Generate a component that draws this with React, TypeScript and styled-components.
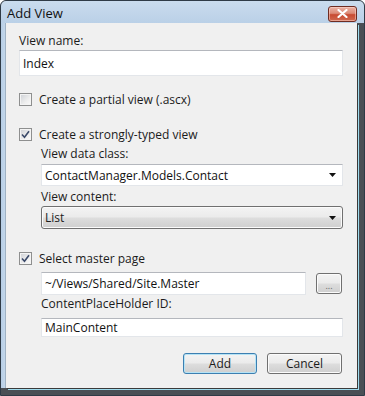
import React from "react";
import styled, { createGlobalStyle, css } from "styled-components";

const FONT = `"Open Sans", "Noto Sans", "DejaVu Sans", sans-serif`;

const Global = createGlobalStyle`
  html, body { margin: 0; padding: 0; background: #ffffff; }
  body { font-family: ${FONT}; }
`;

const Window = styled.div`
  width: 365px;
  height: 396px;
  box-sizing: border-box;
  display: flex;
  flex-direction: column;
  background: #4a4f55;
  border: 1px solid #2f3b47;
  border-radius: 6px 6px 0 0;
  overflow: hidden;
  font-family: ${FONT};
  color: #1b1b1b;
`;

const TitleBar = styled.div`
  height: 22px;
  flex: none;
  display: flex;
  align-items: center;
  justify-content: space-between;
  padding: 0 7px 0 6px;
  background: linear-gradient(#cadcee, #bad0e7);
`;

const Title = styled.div`
  font-size: 13px;
  color: #111;
  margin-top: 1px;
`;

const CloseButton = styled.div`
  width: 29px;
  height: 16px;
  box-sizing: border-box;
  margin-top: 3px;
  border: 1px solid #6e2c22;
  border-radius: 3px;
  background: linear-gradient(#ebb3a6 0%, #dc8a76 45%, #c84b32 55%, #d06a50 100%);
  box-shadow: inset 0 0 0 1px rgba(255, 220, 210, 0.5);
  display: flex;
  align-items: center;
  justify-content: center;
`;

const FrameBody = styled.div`
  flex: 1;
  display: flex;
  padding: 0 7px 7px 5px;
  background: linear-gradient(to right, #b7cee6, #c6d9ec) no-repeat;
  background-size: 5px calc(100% - 7px);
`;

const Content = styled.div`
  flex: 1;
  display: flex;
  flex-direction: column;
  background: #f0f0f0;
  padding: 9px 14px 14px 13px;
  box-shadow: 1px 1px 0 #3a3a3a, 2px 2px 0 #9fdcee, -1px 0 0 #9fb2c4;
`;

const Label = styled.div<{ $mt?: number }>`
  font-size: 12px;
  line-height: 18px;
  height: 18px;
  margin-top: ${(p) => p.$mt ?? 0}px;
  white-space: nowrap;
`;

const inputBase = css`
  box-sizing: border-box;
  background: #ffffff;
  border: 1px solid #e3e6ea;
  border-top-color: #b4b7bd;
  font-size: 12px;
  color: #111;
  display: flex;
  align-items: center;
  padding-left: 3px;
  white-space: nowrap;
`;

const TextBox = styled.div<{ $h?: number; $mt?: number }>`
  ${inputBase};
  height: ${(p) => p.$h ?? 23}px;
  margin-top: ${(p) => p.$mt ?? 0}px;
  flex: 1;
`;

const ComboEdit = styled.div<{ $mt?: number }>`
  ${inputBase};
  height: 22px;
  margin-top: ${(p) => p.$mt ?? 0}px;
  justify-content: space-between;
  padding-right: 6px;
`;

const buttonFace = css`
  box-sizing: border-box;
  border: 1px solid #707070;
  border-radius: 3px;
  background: linear-gradient(#f3f3f3 0%, #ebebeb 48%, #dddddd 52%, #cfcfcf 100%);
  box-shadow: inset 0 0 0 1px #fbfbfb;
`;

const ComboList = styled.div<{ $mt?: number }>`
  ${buttonFace};
  height: 23px;
  margin-top: ${(p) => p.$mt ?? 0}px;
  display: flex;
  align-items: center;
  justify-content: space-between;
  padding: 0 6px 0 3px;
  font-size: 12px;
`;

const CheckRow = styled.div<{ $mt: number }>`
  display: flex;
  align-items: center;
  gap: 7px;
  height: 13px;
  margin-top: ${(p) => p.$mt}px;
  font-size: 12px;
  line-height: 16px;
  white-space: nowrap;
`;

const Box = styled.div`
  width: 13px;
  height: 13px;
  box-sizing: border-box;
  flex: none;
  border: 1px solid #8e8f8f;
  background: linear-gradient(135deg, #cdd0d5 0%, #eeeeee 60%, #fbfbfb 100%);
  box-shadow: inset 0 0 0 1px #f4f4f4;
  display: flex;
  align-items: center;
  justify-content: center;
`;

const Indented = styled.div<{ $mt?: number }>`
  display: flex;
  flex-direction: column;
  margin-left: 22px;
  margin-top: ${(p) => p.$mt ?? 0}px;
`;

const PathRow = styled.div`
  display: flex;
  align-items: center;
  gap: 10px;
  padding-right: 1px;
`;

const BrowseButton = styled.div`
  ${buttonFace};
  width: 26px;
  height: 21px;
  flex: none;
  display: flex;
  align-items: flex-end;
  justify-content: center;
  font-size: 9px;
  color: #666;
  line-height: 14px;
`;

const ButtonRow = styled.div`
  display: flex;
  justify-content: flex-end;
  gap: 10px;
  margin-top: 16px;
  padding-right: 1px;
`;

const DialogButton = styled.div<{ $default?: boolean; $w: number }>`
  ${buttonFace};
  width: ${(p) => p.$w}px;
  height: 21px;
  display: flex;
  align-items: center;
  justify-content: center;
  font-size: 12px;
  ${(p) =>
    p.$default &&
    css`
      border-color: #3c7fb1;
      box-shadow: inset 0 0 0 1px #b6e3f5;
    `}
`;

const Arrow = () => (
  <svg width="7" height="4" viewBox="0 0 7 4">
    <path d="M0 0 H7 L3.5 4 Z" fill="#111" />
  </svg>
);

const Check = () => (
  <svg width="9" height="9" viewBox="0 0 9 9">
    <path d="M1 4.5 L3.5 7.2 L8 1.2" fill="none" stroke="#3b4a6a" strokeWidth="1.6" />
  </svg>
);

const CloseX = () => (
  <svg width="11" height="9" viewBox="0 0 11 9">
    <path d="M1.5 1 L9.5 8 M9.5 1 L1.5 8" stroke="#ffffff" strokeWidth="2.2" strokeLinecap="round" />
  </svg>
);

export default function App() {
  return (
    <>
      <Global />
      <Window>
        <TitleBar>
          <Title>Add View</Title>
          <CloseButton>
            <CloseX />
          </CloseButton>
        </TitleBar>
        <FrameBody>
          <Content>
            <Label>View name:</Label>
            <TextBox>Index</TextBox>

            <CheckRow $mt={17}>
              <Box />
              <span>Create a partial view (.ascx)</span>
            </CheckRow>

            <CheckRow $mt={22}>
              <Box>
                <Check />
              </Box>
              <span>Create a strongly-typed view</span>
            </CheckRow>

            <Indented $mt={4}>
              <Label>View data class:</Label>
              <ComboEdit $mt={1}>
                <span>ContactManager.Models.Contact</span>
                <Arrow />
              </ComboEdit>
              <Label $mt={2}>View content:</Label>
              <ComboList>
                <span>List</span>
                <Arrow />
              </ComboList>
            </Indented>

            <CheckRow $mt={23}>
              <Box>
                <Check />
              </Box>
              <span>Select master page</span>
            </CheckRow>

            <Indented $mt={7}>
              <PathRow>
                <TextBox>~/Views/Shared/Site.Master</TextBox>
                <BrowseButton>...</BrowseButton>
              </PathRow>
              <Label>ContentPlaceHolder ID:</Label>
              <TextBox $h={22} $mt={5}>MainContent</TextBox>
            </Indented>

            <ButtonRow>
              <DialogButton $default $w={74}>Add</DialogButton>
              <DialogButton $w={75}>Cancel</DialogButton>
            </ButtonRow>
          </Content>
        </FrameBody>
      </Window>
    </>
  );
}
